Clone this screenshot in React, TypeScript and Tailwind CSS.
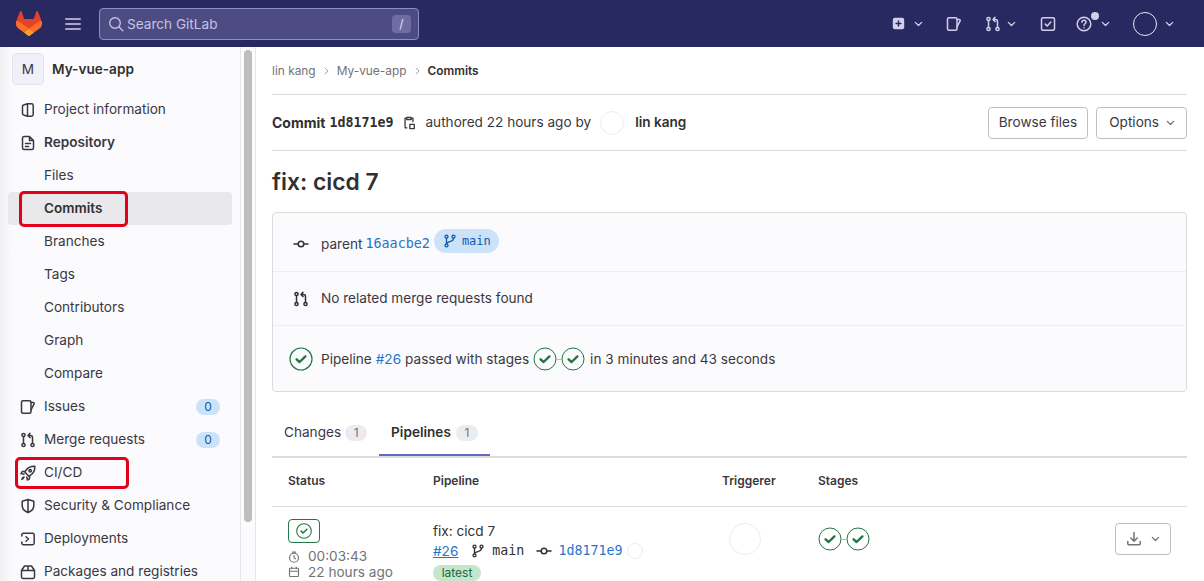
import { ReactNode } from "react";

const FONT = "[font-family:Inter,'Liberation_Sans',sans-serif]";
const MONO = "[font-family:'DejaVu_Sans_Mono','Liberation_Mono',monospace]";

function Icon({ children, className = "" }: { children: ReactNode; className?: string }) {
  return (
    <svg viewBox="0 0 16 16" fill="none" stroke="currentColor" strokeWidth={1.5} strokeLinecap="round" strokeLinejoin="round" className={className}>
      {children}
    </svg>
  );
}

const Chevron = ({ className = "" }: { className?: string }) => (
  <svg viewBox="0 0 10 6" fill="none" stroke="currentColor" strokeWidth={1.5} strokeLinecap="round" strokeLinejoin="round" className={`w-[9px] h-[6px] ${className}`}>
    <path d="M1.5 1.2 5 4.6l3.5-3.4" />
  </svg>
);

const MergeIcon = ({ className = "" }: { className?: string }) => (
  <Icon className={className}>
    <circle cx="3.500" cy="3" r="1.600" />
    <circle cx="3.500" cy="13" r="1.600" />
    <circle cx="12.500" cy="13" r="1.600" />
    <path d="M3.500 4.600v6.800M12.500 11.400V5.500c0-1.200-.8-2-2-2H8.500M10 1.200 8 3.400l2 2.200" />
  </Icon>
);

const IssueIcon = ({ className = "" }: { className?: string }) => (
  <Icon className={className}>
    <rect x="1.500" y="1.800" width="9.500" height="12.400" rx="1.500" />
    <path d="M11 3.500h2.200c.8 0 1.200.6 1 1.200L11 11" />
  </Icon>
);

const CommitIcon = ({ className = "" }: { className?: string }) => (
  <Icon className={className}>
    <circle cx="8" cy="8" r="2.800" />
    <path d="M1 8h4.200M10.800 8H15" />
  </Icon>
);

const BranchIcon = ({ className = "" }: { className?: string }) => (
  <Icon className={className}>
    <circle cx="4" cy="3" r="1.700" />
    <circle cx="12" cy="3" r="1.700" />
    <circle cx="4" cy="13" r="1.700" />
    <path d="M4 4.700v6.600M12 4.700c0 3-2 3.600-4 4-2 .4-4 1-4 2.600" />
  </Icon>
);

const CheckCircle = ({ className = "", stroke = 1 }: { className?: string; stroke?: number }) => (
  <svg viewBox="0 0 24 24" fill="none" className={`text-[#217645] ${className}`}>
    <circle cx="12" cy="12" r="11" stroke="currentColor" strokeWidth={stroke} />
    <path d="M7.600 12.300 10.600 15l5.800-5.600" stroke="currentColor" strokeWidth={2.400} strokeLinecap="round" strokeLinejoin="round" />
  </svg>
);

const Stages = () => (
  <span className="inline-flex items-center">
    <CheckCircle className="w-6 h-6" />
    <span className="w-1 h-px bg-[#bfbfc3]" />
    <CheckCircle className="w-6 h-6" />
  </span>
);

const navIcons: Record<string, ReactNode> = {
  "Project information": (
    <Icon className="w-4 h-4">
      <path d="M7.500 1.800 3.600 3c-.7.2-1.100.7-1.100 1.400v7.200c0 .7.400 1.200 1.100 1.400l3.900 1.200zM7.500 1.800h4c1 0 1.700.7 1.700 1.700v9c0 1-.7 1.700-1.700 1.700h-4" />
    </Icon>
  ),
  Repository: (
    <Icon className="w-4 h-4">
      <path d="M9.500 1.500H4c-.8 0-1.500.7-1.500 1.500v10c0 .8.700 1.500 1.500 1.500h8c.8 0 1.500-.7 1.500-1.500V5.500zM9.500 1.500v4h4M5.500 8.500h5M5.500 11.500h3" />
    </Icon>
  ),
  Issues: <IssueIcon className="w-4 h-4" />,
  "Merge requests": <MergeIcon className="w-4 h-4" />,
  "CI/CD": (
    <Icon className="w-4 h-4">
      <path d="M14.800 1.200c-4-.2-7 1.200-9 4.300l-1 1.600 4.100 4.100 1.600-1c3.100-2 4.500-5 4.300-9zM5 6.200 2.200 6.600 1 8.600l3 .6M9.800 11l-.4 2.800-2 1.200-.6-3M4 12c-1 .2-1.800 1-2.200 2.200 1.200-.4 2-1.200 2.200-2.200z" />
      <circle cx="10.200" cy="5.800" r="1.200" />
    </Icon>
  ),
  "Security & Compliance": (
    <Icon className="w-4 h-4">
      <path d="M8 1.500 2.200 3.200v4.300c0 3.400 2.400 5.800 5.800 7 3.400-1.200 5.800-3.600 5.800-7V3.200zM8 1.500v13" />
    </Icon>
  ),
  Deployments: (
    <Icon className="w-4 h-4">
      <path d="M1.800 5V4c0-1 .7-1.700 1.700-1.700h9c1 0 1.700.7 1.700 1.700v8c0 1-.7 1.700-1.700 1.700h-9c-1 0-1.700-.7-1.700-1.700v-1M6 5.800 8.500 8 6 10.200" />
    </Icon>
  ),
  "Packages and registries": (
    <Icon className="w-4 h-4">
      <path d="M4.500 2h7l3 4.500V13c0 .8-.6 1.400-1.400 1.400H2.900c-.8 0-1.400-.6-1.400-1.400V6.500zM1.500 6.500h13M8 2v4.500" />
    </Icon>
  ),
};

const navItems = [
  { label: "Project information" },
  { label: "Repository", bold: true },
  { label: "Files", sub: true },
  { label: "Commits", sub: true, active: true },
  { label: "Branches", sub: true },
  { label: "Tags", sub: true },
  { label: "Contributors", sub: true },
  { label: "Graph", sub: true },
  { label: "Compare", sub: true },
  { label: "Issues", count: 0 },
  { label: "Merge requests", count: 0 },
  { label: "CI/CD" },
  { label: "Security & Compliance" },
  { label: "Deployments" },
  { label: "Packages and registries" },
];

function TopBar() {
  return (
    <header className="h-[47px] shrink-0 bg-[#292961] flex items-center text-[#d1d0e8]">
      <svg viewBox="0 0 25 24" className="w-[26px] h-[25px] ml-4">
        <path d="m24.507 9.5-.034-.09L21.082.562a.896.896 0 0 0-1.694.091l-2.29 7.01H7.825L5.535.653a.898.898 0 0 0-1.694-.09L.451 9.411.416 9.5a6.297 6.297 0 0 0 2.09 7.278l.012.01.03.022 5.16 3.867 2.56 1.935 1.554 1.176a1.051 1.051 0 0 0 1.268 0l1.555-1.176 2.56-1.935 5.197-3.89.014-.01A6.297 6.297 0 0 0 24.507 9.5Z" fill="#e24329" />
        <path d="m24.507 9.5-.034-.09a11.44 11.44 0 0 0-4.56 2.051l-7.447 5.632 4.742 3.584 5.197-3.89.014-.01A6.297 6.297 0 0 0 24.507 9.5Z" fill="#fc6d26" />
        <path d="m7.707 20.677 2.56 1.935 1.555 1.176a1.051 1.051 0 0 0 1.268 0l1.555-1.176 2.56-1.935-4.743-3.584-4.755 3.584Z" fill="#fca326" />
        <path d="M5.01 11.461a11.43 11.43 0 0 0-4.56-2.05L.416 9.5a6.297 6.297 0 0 0 2.09 7.278l.012.01.03.022 5.16 3.867 4.745-3.584-7.444-5.632Z" fill="#fc6d26" />
      </svg>
      <svg viewBox="0 0 16 12" className="w-4 h-3 ml-[23px]" stroke="currentColor" strokeWidth={1.300} strokeLinecap="round">
        <path d="M.7 1h14.600M.7 6h14.600M.7 11h14.600" />
      </svg>
      <div className="ml-[18px] w-[320px] h-[32px] rounded border border-[#8e8dc4] bg-[#4d4c82] flex items-center pl-2 pr-[7px] text-[#c3c2e4]">
        <svg viewBox="0 0 16 16" className="w-4 h-4" fill="none" stroke="currentColor" strokeWidth={1.400} strokeLinecap="round">
          <circle cx="7" cy="7" r="5.300" />
          <path d="m11 11 3.800 3.800" />
        </svg>
        <span className="ml-[3px] mt-px text-[13.6px]">Search GitLab</span>
        <span className="ml-auto w-[19px] h-[18px] rounded-sm bg-[#6d6ca3] flex items-center justify-center text-xs text-[#e3e2f3]">/</span>
      </div>
      <div className="ml-auto flex items-center">
        <svg viewBox="0 0 16 16" className="w-[13px] h-[13px]">
          <rect x="1" y="1" width="14" height="14" rx="2.500" fill="#d1d0e8" />
          <path d="M8 5v6M5 8h6" stroke="#292961" strokeWidth={1.800} strokeLinecap="round" />
        </svg>
        <Chevron className="ml-[9px]" />
        <IssueIcon className="w-4 h-4 ml-[23px]" />
        <MergeIcon className="w-4 h-4 ml-[23px]" />
        <Chevron className="ml-[6px]" />
        <Icon className="w-4 h-4 ml-[24px]">
          <rect x="1.500" y="1.800" width="13" height="12.400" rx="1.500" />
          <path d="m5.200 8 2 2 3.600-4" />
        </Icon>
        <span className="relative ml-[20px] w-4 h-4">
          <Icon className="w-4 h-4">
            <circle cx="8" cy="8" r="6.800" />
            <path d="M6 6.300c0-1.200.9-2 2-2s2 .8 2 1.900c0 1.500-2 1.700-2 3.200M8 11.700v.1" />
          </Icon>
          <span className="absolute -top-[4px] left-[15px] w-2 h-2 rounded-full bg-[#d1d0e8]" />
        </span>
        <Chevron className="ml-[9px] mt-px" />
        <span className="ml-[23px] w-6 h-6 rounded-full border border-[#e8e7f5]" />
        <Chevron className="ml-[8px] mr-[30px]" />
      </div>
    </header>
  );
}

function Sidebar() {
  return (
    <aside className="relative w-[256px] shrink-0 flex bg-[#fbfafd] border-r border-[#e6e6e8]">
      <div className="w-[241px] shrink-0 border-r border-[#e6e6e8] bg-gradient-to-r from-[#f1f1f3] via-[#fbfafd] via-[5%] to-[#fbfafd]">
        <div className="flex items-center h-[32px] mt-[6px] ml-[12px]">
          <span className="w-8 h-8 rounded border border-[#e4e3f0] bg-[#f0f0f8] flex items-center justify-center text-[13.6px] text-[#3a383f]">M</span>
          <span className="ml-2 text-[13.6px] font-semibold text-[#303030]">My-vue-app</span>
        </div>
        <nav className="mt-2">
          {navItems.map((item) => (
            <div
              key={item.label}
              className={`h-[33px] mx-2 pr-3 pl-[36px] flex items-center text-[13.6px] ${item.active ? "rounded bg-[#e9e9ec] font-semibold text-[#303030]" : "text-[#3a383f]"} ${item.bold ? "font-semibold" : ""}`}
            >
              {!item.sub && <span className="-ml-[24px] w-[24px] shrink-0 font-normal text-[#3a383f]">{navIcons[item.label]}</span>}
              <span className="whitespace-nowrap">{item.label}</span>
              {item.count !== undefined && (
                <span className="ml-auto w-6 h-4 rounded-full bg-[#cbe2f9] text-[#0b5cad] text-xs flex items-center justify-center">{item.count}</span>
              )}
            </div>
          ))}
        </nav>
      </div>
      <div className="flex-1 pt-[3px] px-[3px]">
        <div className="h-[472px] w-2 rounded-full bg-[#bdbdbd]" />
      </div>
      {/* red annotation boxes drawn on the screenshot */}
      <span className="absolute left-[19px] top-[144px] w-[109px] h-[36px] rounded-[5px] border-[3px] border-[#e3001b]" />
      <span className="absolute left-[15px] top-[410px] w-[114px] h-[32px] rounded-[5px] border-[3px] border-[#e3001b]" />
    </aside>
  );
}

function InfoRow({ icon, children, className = "" }: { icon: ReactNode; children: ReactNode; className?: string }) {
  return (
    <div className={`flex items-center pl-4 text-[13.6px] text-[#3a383f] ${className}`}>
      <span className="w-8 shrink-0 flex items-center">{icon}</span>
      {children}
    </div>
  );
}

function CommitPage() {
  return (
    <main className="flex-1 min-w-0 pl-4 pr-[17px] bg-white">
      <div className="h-[48px] flex items-center text-[11.9px] text-[#737278] border-b border-[#dcdcde] w-full">
        <span>lin kang</span>
        <svg viewBox="0 0 6 10" className="w-[5px] h-2 mx-2" fill="none" stroke="#9a9a9f" strokeWidth={1.200}><path d="m1 1 4 4-4 4" /></svg>
        <span>My-vue-app</span>
        <svg viewBox="0 0 6 10" className="w-[5px] h-2 mx-2" fill="none" stroke="#9a9a9f" strokeWidth={1.200}><path d="m1 1 4 4-4 4" /></svg>
        <span className="font-semibold text-[#303030]">Commits</span>
      </div>
      <div className="h-[56px] flex items-center border-b border-[#dcdcde] text-[13.6px] text-[#3a383f]">
        <span className="font-bold text-sm text-[#303030]">Commit</span>
        <span className={`ml-1 font-bold text-[13.3px] text-[#303030] ${MONO}`}>1d8171e9</span>
        <Icon className="w-[14px] h-[14px] ml-[9px]">
          <path d="M5 2.500H3.500v11h2M11 2.500h1.500v4M5.500 1.500h5v2.500h-5zM9 9.500h5v5H9z" />
        </Icon>
        <span className="ml-[9px]">authored 22 hours ago by</span>
        <span className="ml-[9px] w-6 h-6 rounded-full border border-[#ececef] bg-white" />
        <span className="ml-[11px] font-semibold text-[#303030]">lin kang</span>
        <button className="ml-auto h-8 px-[10px] rounded border border-[#bfbfc3] text-[13.6px] text-[#3a383f]">Browse files</button>
        <button className="ml-2 h-8 pl-3 pr-[11px] rounded border border-[#bfbfc3] text-[13.6px] text-[#3a383f] flex items-center gap-[7px]">
          Options <Chevron className="text-[#737278]" />
        </button>
      </div>
      <h1 className="h-[61px] pt-px flex items-center text-[22.8px] font-semibold text-[#303030]">fix: cicd 7</h1>
      <section className="h-[180px] rounded border border-[#dcdcde] bg-[#fbfafd]">
        <InfoRow icon={<CommitIcon className="w-4 h-4 ml-1 text-[#303030]" />} className="h-[59px] pt-1 border-b border-[#eeeef0]">
          <span>parent</span>
          <a className={`ml-[3px] text-[#1f75cb] text-[13.4px] ${MONO}`}>16aacbe2</a>
          <span className="ml-1 -mt-[6px] h-6 pl-[9px] pr-2 rounded-full bg-[#cbe2f9] flex items-center gap-[5px] text-[#0b5cad]">
            <BranchIcon className="w-[14px] h-[14px]" />
            <span className={`text-xs ${MONO}`}>main</span>
          </span>
        </InfoRow>
        <InfoRow icon={<MergeIcon className="w-4 h-4 ml-1 text-[#303030]" />} className="h-[54px] border-b border-[#eeeef0]">
          No related merge requests found
        </InfoRow>
        <InfoRow icon={<CheckCircle className="w-6 h-6" stroke={1.200} />} className="h-[66px]">
          <span>Pipeline</span>
          <a className="ml-1 text-[#1f75cb]">#26</a>
          <span className="ml-1">passed with stages</span>
          <span className="ml-1 flex"><Stages /></span>
          <span className="ml-[5px]">in 3 minutes and 43 seconds</span>
        </InfoRow>
      </section>
      <div className="mt-[17px] h-[49px] flex items-stretch border-b-2 border-[#dcdcde] text-[13.6px] text-[#3a383f]">
        <div className="flex items-center px-3">
          Changes
          <span className="ml-1 w-[22px] h-4 rounded-full bg-[#ececef] text-xs text-[#737278] flex items-center justify-center">1</span>
        </div>
        <div className="flex items-center px-3 pt-[2px] font-semibold text-[#303030] border-b-2 border-[#6666c4]">
          Pipelines
          <span className="ml-[5px] w-[22px] h-4 rounded-full bg-[#ececef] text-xs font-normal text-[#737278] flex items-center justify-center">1</span>
        </div>
      </div>
      <div className="h-[49px] pb-[2px] flex items-center border-b border-[#dcdcde] text-xs font-semibold text-[#3a383f]">
        <span className="w-[161px] pl-4">Status</span>
        <span className="w-[289px]">Pipeline</span>
        <span className="w-[96px]">Triggerer</span>
        <span>Stages</span>
      </div>
      <div className="flex pt-3">
        <div className="w-[161px] pl-4 shrink-0">
          <span className="w-8 h-6 rounded-sm border border-[#217645] flex items-center justify-center">
            <CheckCircle className="w-4 h-4" stroke={1.600} />
          </span>
          <div className="mt-[5px] flex items-center text-[13.6px] leading-4 text-[#737278]">
            <Icon className="w-3 h-3 mr-2 mt-px">
              <circle cx="8" cy="9" r="6" />
              <path d="M8 6v3l2 1.500M6 1.500h4" />
            </Icon>
            00:03:43
          </div>
          <div className="flex items-center text-[13.6px] leading-4 text-[#737278]">
            <Icon className="w-3 h-3 mr-2">
              <rect x="2" y="3" width="12" height="11" rx="1" />
              <path d="M2 7h12M5 1.500v2M11 1.500v2" />
            </Icon>
            22 hours ago
          </div>
        </div>
        <div className="w-[289px] shrink-0 text-[13.6px] text-[#303030]">
          <div className="leading-[20px] mt-[2px]">fix: cicd 7</div>
          <div className="flex items-center h-[20px]">
            <a className="text-[#1f75cb] underline">#26</a>
            <BranchIcon className="w-[14px] h-[14px] ml-[13px] text-[#303030]" />
            <span className={`ml-[7px] text-[13.3px] ${MONO}`}>main</span>
            <CommitIcon className="w-4 h-4 ml-3 text-[#303030]" />
            <a className={`ml-[6px] text-[13.3px] text-[#1f75cb] ${MONO}`}>1d8171e9</a>
            <span className="ml-[5px] w-4 h-4 rounded-full border border-[#ececef]" />
          </div>
          <span className="mt-1 h-4 w-[48px] rounded-full bg-[#c3e6cd] text-xs text-[#24663b] flex items-center justify-center">latest</span>
        </div>
        <div className="w-[96px] shrink-0 pl-[7px] pt-1">
          <span className="block w-8 h-8 rounded-full border border-[#ececef]" />
        </div>
        <div className="pt-2 flex-1"><Stages /></div>
        <button className="mt-1 mr-4 w-14 h-8 rounded border border-[#bfbfc3] flex items-center justify-center gap-[9px] text-[#737278]">
          <Icon className="w-4 h-4">
            <path d="M8 1.500v8.500M4.800 7 8 10.200 11.200 7M1.800 10.500v2.300c0 .6.5 1 1 1h10.400c.5 0 1-.4 1-1v-2.300" />
          </Icon>
          <Chevron />
        </button>
      </div>
    </main>
  );
}

export default function App() {
  return (
    <div className={`w-[1204px] h-[581px] overflow-hidden flex flex-col bg-white ${FONT}`}>
      <TopBar />
      <div className="flex flex-1 min-h-0">
        <Sidebar />
        <CommitPage />
      </div>
    </div>
  );
}
